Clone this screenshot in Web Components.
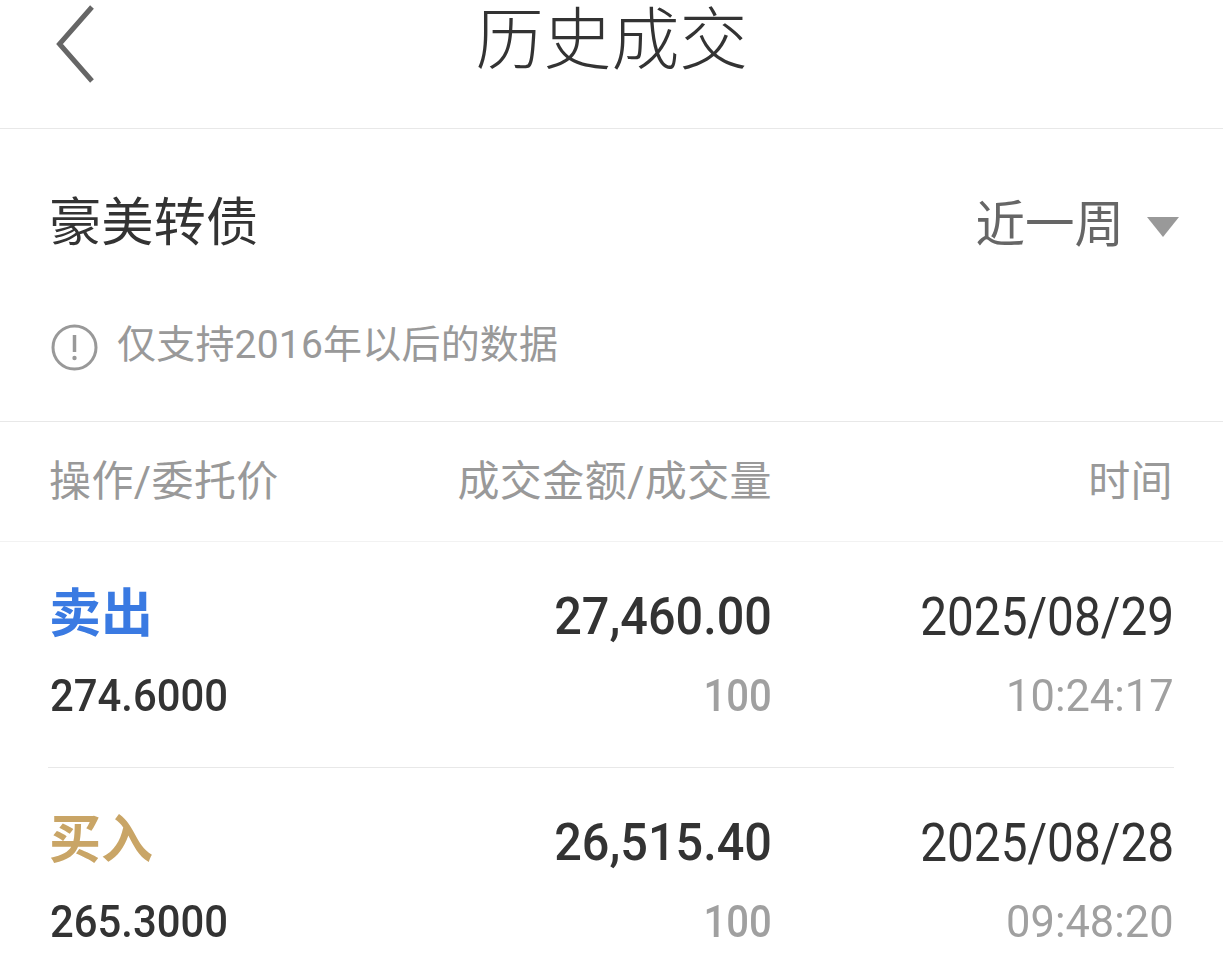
<!DOCTYPE html>
<html lang="zh"><head><meta charset="utf-8"><title>历史成交</title>
<style>
html,body{margin:0;padding:0;background:#fff;overflow:hidden}
body{width:1223px;height:976px;font-family:Roboto,"Noto Sans CJK SC",sans-serif;color:#333}
</style></head><body>
<app-header>历史成交</app-header>
<stock-filter name="豪美转债" range="近一周"></stock-filter>
<hint-row>仅支持2016年以后的数据</hint-row>
<table-head></table-head>
<deal-row side="卖出" kind="sell" price="274.6000" amount="27,460.00" qty="100" date="2025/08/29" time="10:24:17"></deal-row>
<deal-row side="买入" kind="buy" price="265.3000" amount="26,515.40" qty="100" date="2025/08/28" time="09:48:20"></deal-row>
<script>
const CJK='"Noto Sans CJK SC",sans-serif';
function def(tag,render){customElements.define(tag,class extends HTMLElement{connectedCallback(){if(this.shadowRoot)return;this.attachShadow({mode:'open'}).innerHTML=render(this);}});}
def('app-header',()=>`<style>
:host{display:block;height:128px;border-bottom:1px solid #e8e8e8;box-sizing:content-box}
.b{height:128px;display:grid;grid-template-columns:1fr auto 1fr;align-items:start}
svg{display:block;margin:0 0 0 54px;filter:blur(.5px)}
h1{margin:0;font:300 68px/70px ${CJK};color:#333}
</style><div class="b"><svg width="44" height="84" viewBox="0 0 44 84"><path d="M38 7 5.500 44 38 81" fill="none" stroke="#666" stroke-width="5"/></svg><h1><slot></slot></h1><span></span></div>`);
def('stock-filter',e=>`<style>
:host{display:flex;align-items:flex-start;justify-content:space-between;height:188px;padding:0 44px 0 49px;font-family:${CJK}}
.n{font-size:52.300px;font-weight:400;color:#333;line-height:60px;margin-top:59px}
.r{display:flex;align-items:center;gap:23px;font-size:49.500px;color:#666;line-height:60px;margin-top:62px}
svg{display:block;margin-top:12px}
</style><span class="n">${e.getAttribute('name')}</span><span class="r">${e.getAttribute('range')}<svg width="32" height="20" viewBox="0 0 32 20"><path d="M0 0H32L16 20Z" fill="#999"/></svg></span>`);
def('hint-row',()=>`<style>
:host{display:flex;align-items:flex-start;gap:19px;height:104px;padding-left:51px;border-bottom:1px solid #e8e8e8;font:39px/50px Roboto,${CJK};color:#999;box-sizing:content-box}
svg{display:block;margin-top:7px;flex:none}
span{margin-top:3px;letter-spacing:.2px}
</style><svg width="47" height="47" viewBox="0 0 47 47"><circle cx="23.500" cy="23.500" r="21.500" fill="none" stroke="#999" stroke-width="3"/><path d="M23.500 11V28" stroke="#999" stroke-width="3.500"/><circle cx="23.500" cy="34" r="2.200" fill="#999"/></svg><span><slot></slot></span>`);
def('table-head',()=>`<style>
:host{display:grid;grid-template-columns:324px 397px 402px;align-items:center;height:119px;padding-left:50px;border-bottom:1px solid #f2f2f2;font:42px/50px Roboto,${CJK};color:#999;letter-spacing:.4px}
.a{margin-left:-1px}
.m,.t{text-align:right}
.m{margin-right:-1px}
</style><span class="a">操作/委托价</span><span class="m">成交金额/成交量</span><span class="t">时间</span>`);
def('deal-row',e=>{const a=n=>e.getAttribute(n);return `<style>
:host{display:block;height:225px;margin:0 49px 0 48px;padding-left:2px;border-bottom:1px solid #e8e8e8;box-sizing:content-box}
:host(:last-of-type){border-bottom:0}
.g{display:grid;grid-template-columns:322px 397px 1fr;grid-template-rows:60px 50px;row-gap:24px;padding-top:45px;align-items:center}
.side{font:700 52px/60px ${CJK};margin:-14px 0 0 -1px}
.sell{color:#3a7ae2}.buy{color:#c9a566}
.num{font-family:Roboto,sans-serif;display:inline-block;justify-self:end;transform-origin:100% 50%;white-space:nowrap}
.big{font-size:53px;line-height:60px;color:#333;transform:scaleX(.9)}
.amt{font-size:52px;font-weight:500;transform:scaleX(.935);margin-right:-3px}
.price{justify-self:start;transform-origin:0 50%;font-size:45px;font-weight:500;line-height:50px;color:#333;transform:scaleX(.93)}
.sub{font-size:45px;line-height:50px;color:#a0a0a0;transform:scaleX(.965)}
.q{font-weight:500;transform:scaleX(.89);margin-right:-3px}
</style><div class="g"><span class="side ${a('kind')}">${a('side')}</span><span class="num big amt">${a('amount')}</span><span class="num big">${a('date')}</span><span class="num price">${a('price')}</span><span class="num sub q">${a('qty')}</span><span class="num sub">${a('time')}</span></div>`});
</script></body></html>
